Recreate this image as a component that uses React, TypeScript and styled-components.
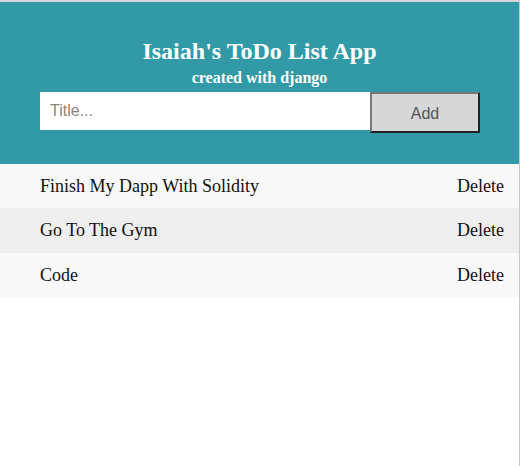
import React from "react";
import styled, { createGlobalStyle } from "styled-components";

const Global = createGlobalStyle`
  html, body { margin: 0; padding: 0; background: #fff; }
  body { font-family: "Liberation Serif", "Times New Roman", serif; }
`;

const Page = styled.div`
  width: 519px;
  min-height: 464px;
  border-top: 2px solid #d3d6d8;
  border-right: 1px solid #c9c9c9;
  background: #fff;
`;

const Header = styled.header`
  background: #329aa7;
  padding: 35px 0 31px;
  display: flex;
  flex-direction: column;
  align-items: stretch;
`;

const Title = styled.h1`
  margin: 0;
  color: #fff;
  font-size: 24px;
  line-height: 28px;
  font-weight: bold;
  text-align: center;
`;

const Subtitle = styled.h2`
  margin: 3px 0 0;
  color: #fff;
  font-size: 16px;
  line-height: 19px;
  font-weight: bold;
  text-align: center;
`;

const Form = styled.form`
  display: flex;
  align-items: flex-start;
  margin-top: 5px;
  padding-left: 40px;
`;

const Input = styled.input`
  box-sizing: border-box;
  width: 330px;
  height: 38px;
  border: none;
  outline: none;
  padding: 0 10px;
  font-family: "Liberation Sans", Arial, sans-serif;
  font-size: 16px;
  color: #333;
  background: #fff;
  &::placeholder { color: #8d827d; }
`;

const AddButton = styled.button`
  box-sizing: border-box;
  width: 110px;
  height: 41px;
  background: #d7d7d7;
  border-style: solid;
  border-width: 2px;
  border-color: #767676 #222 #222 #767676;
  font-family: "Liberation Sans", Arial, sans-serif;
  font-size: 16px;
  color: #555;
  padding: 2px 0 0;
  cursor: pointer;
`;

const List = styled.ul`
  list-style: none;
  margin: 0;
  padding: 0;
`;

const Row = styled.li<{ $alt?: boolean }>`
  display: flex;
  align-items: center;
  justify-content: space-between;
  height: ${(p) => (p.$alt ? 45 : 44)}px;
  padding: 0 15px 0 40px;
  background: ${(p) => (p.$alt ? "#eeeeee" : "#f8f8f8")};
  font-size: 18px;
  color: #111;
`;

const DeleteLink = styled.span`
  font-size: 18px;
  color: #111;
  cursor: pointer;
`;

const items = ["Finish My Dapp With Solidity", "Go To The Gym", "Code"];

export default function App() {
  return (
    <>
      <Global />
      <Page>
        <Header>
          <Title>Isaiah's ToDo List App</Title>
          <Subtitle>created with django</Subtitle>
          <Form onSubmit={(e) => e.preventDefault()}>
            <Input placeholder="Title..." />
            <AddButton type="submit">Add</AddButton>
          </Form>
        </Header>
        <List>
          {items.map((t, i) => (
            <Row key={t} $alt={i % 2 === 1}>
              <span>{t}</span>
              <DeleteLink>Delete</DeleteLink>
            </Row>
          ))}
        </List>
      </Page>
    </>
  );
}
